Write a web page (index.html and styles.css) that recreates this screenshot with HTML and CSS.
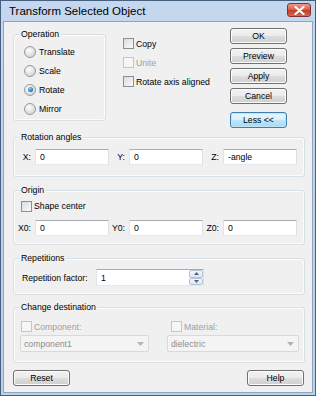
FILE: index.html
```html
<!DOCTYPE html>
<html lang="en">
<head>
    <meta charset="UTF-8">
    <title>Transform Selected Object</title>
    <link rel="stylesheet" href="styles.css">
</head>
<body>
    <div class="window">
        <div class="titlebar">
            <span class="title">Transform Selected Object</span>
            <span class="close-btn">
                <svg width="11" height="9" viewBox="0 0 11 9"><path d="M1.5 1 L9.5 8 M9.5 1 L1.5 8" stroke="#fff" stroke-width="2.2" stroke-linecap="round"/></svg>
            </span>
        </div>
        <div class="content">
            <div class="top-row">
                <div class="group op-group">
                    <div class="group-title">Operation</div>
                    <div class="radio-list">
                        <div class="radio-row"><span class="radio"></span>Translate</div>
                        <div class="radio-row"><span class="radio"></span>Scale</div>
                        <div class="radio-row"><span class="radio checked"></span>Rotate</div>
                        <div class="radio-row"><span class="radio"></span>Mirror</div>
                    </div>
                </div>
                <div class="options">
                    <div class="check-row"><span class="check"></span>Copy</div>
                    <div class="check-row disabled"><span class="check"></span>Unite</div>
                    <div class="check-row"><span class="check"></span>Rotate axis aligned</div>
                </div>
                <div class="buttons">
                    <button class="btn">OK</button>
                    <button class="btn">Preview</button>
                    <button class="btn">Apply</button>
                    <button class="btn">Cancel</button>
                    <button class="btn default less">Less &lt;&lt;</button>
                </div>
            </div>

            <div class="group angles-group">
                <div class="group-title">Rotation angles</div>
                <div class="field-grid">
                    <label>X:</label><input class="text" type="text" value="0">
                    <label>Y:</label><input class="text" type="text" value="0">
                    <label>Z:</label><input class="text" type="text" value="-angle">
                </div>
            </div>

            <div class="group origin-group">
                <div class="group-title">Origin</div>
                <div class="check-row shape"><span class="check"></span>Shape center</div>
                <div class="field-grid">
                    <label>X0:</label><input class="text" type="text" value="0">
                    <label>Y0:</label><input class="text" type="text" value="0">
                    <label>Z0:</label><input class="text" type="text" value="0">
                </div>
            </div>

            <div class="group rep-group">
                <div class="group-title">Repetitions</div>
                <div class="rep-row">
                    <label>Repetition factor:</label>
                    <div class="spinner">
                        <input class="spin-text" type="text" value="1">
                        <div class="spin-btns">
                            <span class="spin-btn"><svg width="5" height="3" viewBox="0 0 5 3"><path d="M0 3 L2.5 0 L5 3Z" fill="#4d6185"/></svg></span>
                            <span class="spin-btn"><svg width="5" height="3" viewBox="0 0 5 3"><path d="M0 0 L2.5 3 L5 0Z" fill="#4d6185"/></svg></span>
                        </div>
                    </div>
                </div>
            </div>

            <div class="group dest-group">
                <div class="group-title">Change destination</div>
                <div class="dest-cols">
                    <div class="dest-col">
                        <div class="check-row disabled"><span class="check"></span>Component:</div>
                        <div class="combo">
                            <span>component1</span>
                            <span class="combo-arrow"><svg width="7" height="4" viewBox="0 0 7 4"><path d="M0 0 L3.5 4 L7 0Z" fill="#b4b4b4"/></svg></span>
                        </div>
                    </div>
                    <div class="dest-col right">
                        <div class="check-row disabled"><span class="check"></span>Material:</div>
                        <div class="combo wide">
                            <span>dielectric</span>
                            <span class="combo-arrow"><svg width="7" height="4" viewBox="0 0 7 4"><path d="M0 0 L3.5 4 L7 0Z" fill="#b4b4b4"/></svg></span>
                        </div>
                    </div>
                </div>
            </div>

            <div class="bottom-row">
                <button class="btn">Reset</button>
                <button class="btn">Help</button>
            </div>
        </div>
    </div>
</body>
</html>
```

FILE: styles.css
```css
body {
    margin: 0;
    font-family: "Liberation Sans", Arial, sans-serif;
    font-size: 8.7px;
    color: #000;
    background: #fff;
}

.window {
    width: 316px;
    height: 396px;
    box-sizing: border-box;
    border: 1px solid #46607f;
    background: linear-gradient(#c4d7ee, #bdd0e9);
    padding: 0 2px 2px 2px;
    display: flex;
    flex-direction: column;
}

.titlebar {
    height: 20px;
    display: flex;
    align-items: center;
    padding-left: 6px;
    position: relative;
}

.title {
    font-size: 11.5px;
    color: #000;
}

.close-btn {
    position: absolute;
    right: 2px;
    top: 2px;
    width: 24px;
    height: 14px;
    box-sizing: border-box;
    border: 1px solid #7a3434;
    border-radius: 3px;
    background: linear-gradient(#eb9c8c, #d9614f 45%, #c63a26 55%, #d66a52);
    display: flex;
    align-items: center;
    justify-content: center;
}

.content {
    flex: 1;
    background: #f0f0f0;
    border: 1px solid #8ea5c2;
    padding: 6px 7px 0 9px;
}

.top-row {
    display: flex;
    height: 100px;
}

.group {
    border: 1px solid #d5dfe5;
    border-radius: 3px;
    box-shadow: inset 0 0 0 1px #fbfcfd;
}

.group-title {
    display: inline-block;
    background: #f0f0f0;
    line-height: 12px;
    padding: 0 2px;
    margin: -7px 0 0 5px;
    vertical-align: top;
}

.op-group {
    margin-top: 6px;
    width: 93px;
    height: 87px;
    box-sizing: border-box;
}

.radio-list {
    margin-top: -3px;
}

.radio-row {
    display: flex;
    align-items: center;
    height: 19px;
    padding-left: 10px;
}

.radio {
    width: 10px;
    height: 10px;
    border-radius: 50%;
    border: 1px solid #9a9a9a;
    background: radial-gradient(circle at 40% 35%, #ffffff, #d8d8d8 70%, #c8c8c8);
    margin-right: 3px;
    position: relative;
}

.radio.checked::after {
    content: "";
    position: absolute;
    left: 2.5px;
    top: 2.5px;
    width: 5px;
    height: 5px;
    border-radius: 50%;
    background: radial-gradient(circle at 40% 35%, #7fd0ff, #1b6fc0 70%, #0c4a8f);
}

.options {
    margin-left: 17px;
    width: 107px;
    padding-top: 6px;
}

.check-row {
    display: flex;
    align-items: center;
    height: 19px;
}

.check {
    width: 9px;
    height: 9px;
    border: 1px solid #8e8f8f;
    background: linear-gradient(135deg, #dcdcdc, #fafafa);
    margin-right: 2px;
}

.check-row.disabled {
    color: #a0a0a0;
}

.check-row.disabled .check {
    border-color: #c6c6c6;
    background: #f6f6f6;
}

.buttons {
    display: flex;
    flex-direction: column;
    gap: 4px;
    width: 57px;
}

.btn {
    width: 57px;
    height: 16px;
    padding: 0;
    font-family: "Liberation Sans", Arial, sans-serif;
    font-size: 8.7px;
    color: #000;
    border: 1px solid #707070;
    border-radius: 3px;
    background: linear-gradient(#f2f2f2, #ebebeb 48%, #dddddd 52%, #cfcfcf);
    box-shadow: inset 0 0 0 1px #fcfcfc;
}

.btn.default {
    border-color: #3c7fb1;
    background: linear-gradient(#eaf6fd, #d9f0fc 48%, #bee6fd 52%, #a7d9f5);
    box-shadow: inset 0 0 0 1px #bfe4f8;
}

.less {
    margin-top: 4px;
}

.angles-group {
    margin-top: 9px;
    height: 40px;
    box-sizing: border-box;
}

.field-grid {
    display: grid;
    grid-template-columns: 20px 74px 20px 74px 20px 74px;
    align-items: center;
    padding-left: 1px;
    margin-top: 1px;
}

.field-grid label {
    text-align: right;
    padding-right: 4px;
}

.text {
    box-sizing: border-box;
    width: 74px;
    height: 16px;
    margin: 0;
    padding: 0 0 0 4px;
    font-family: "Liberation Sans", Arial, sans-serif;
    font-size: 8.7px;
    color: #000;
    background: #fff;
    border: 1px solid;
    border-color: #abadb3 #dbdfe6 #e3e9ef #e2e3ea;
    border-radius: 1px;
}

.origin-group {
    margin-top: 13px;
    height: 55px;
    box-sizing: border-box;
}

.check-row.shape {
    margin: -4px 0 0 7px;
    height: 18px;
}

.origin-group .field-grid {
    margin-top: 5px;
}

.rep-group {
    margin-top: 13px;
    height: 37px;
    box-sizing: border-box;
}

.rep-row {
    display: flex;
    align-items: center;
    padding-left: 8px;
    margin-top: 0;
}

.rep-row label {
    width: 74px;
}

.spinner {
    display: flex;
    width: 108px;
    height: 17px;
    box-sizing: border-box;
    border: 1px solid;
    border-color: #abadb3 #dbdfe6 #e3e9ef #e2e3ea;
    background: #fff;
}

.spin-text {
    flex: 1;
    min-width: 0;
    border: 0;
    padding: 0 0 0 4px;
    margin: 0;
    font-family: "Liberation Sans", Arial, sans-serif;
    font-size: 8.7px;
    background: transparent;
}

.spin-btns {
    display: flex;
    flex-direction: column;
    width: 14px;
}

.spin-btn {
    flex: 1;
    display: flex;
    align-items: center;
    justify-content: center;
    border: 1px solid #b7c2d6;
    border-radius: 2px;
    background: linear-gradient(#f4f7fb, #dde6f2);
}

.dest-group {
    margin-top: 12px;
    height: 56px;
    box-sizing: border-box;
}

.dest-cols {
    display: flex;
    padding-left: 6px;
}

.dest-col .check-row {
    margin-left: 1px;
    height: 17px;
    margin-top: 0;
}

.dest-col.right {
    margin-left: 18px;
}

.dest-col.right .check-row {
    margin-left: 4px;
}

.combo {
    display: flex;
    align-items: center;
    justify-content: space-between;
    width: 129px;
    height: 17px;
    box-sizing: border-box;
    border: 1px solid #d9d9d9;
    border-radius: 2px;
    background: #f4f4f4;
    color: #8d8d8d;
    padding-left: 3px;
}

.combo.wide {
    width: 132px;
}

.combo-arrow {
    display: flex;
    align-items: center;
    justify-content: center;
    width: 16px;
    height: 100%;
}

.bottom-row {
    display: flex;
    justify-content: space-between;
    margin-top: 7px;
    padding-right: 1px;
}
```
